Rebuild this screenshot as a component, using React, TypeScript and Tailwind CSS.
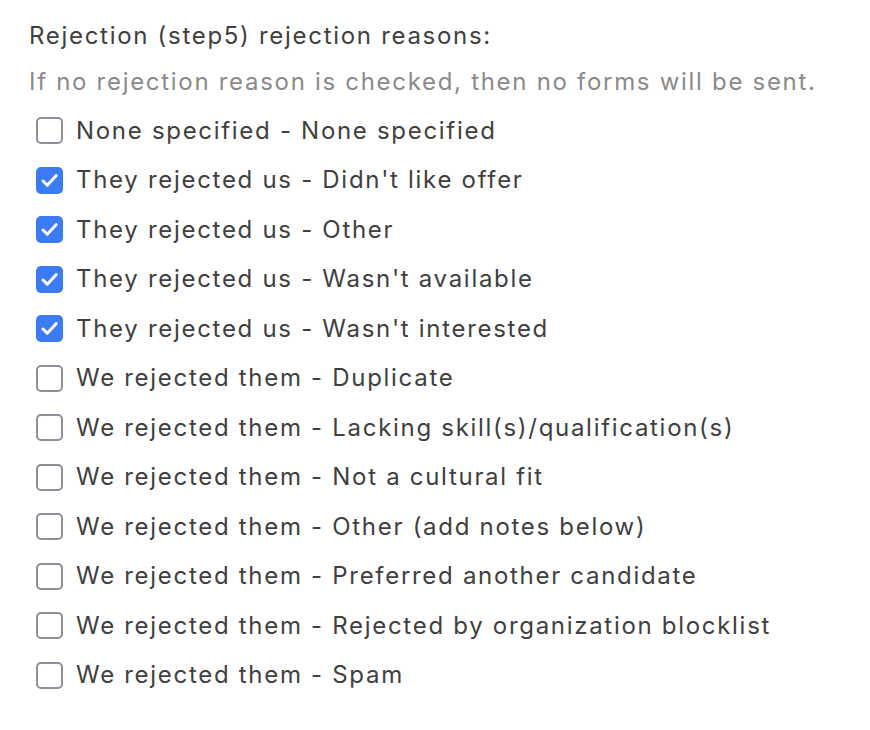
import React from "react";

const items: { label: string; checked: boolean }[] = [
  { label: "None specified - None specified", checked: false },
  { label: "They rejected us - Didn't like offer", checked: true },
  { label: "They rejected us - Other", checked: true },
  { label: "They rejected us - Wasn't available", checked: true },
  { label: "They rejected us - Wasn't interested", checked: true },
  { label: "We rejected them - Duplicate", checked: false },
  { label: "We rejected them - Lacking skill(s)/qualification(s)", checked: false },
  { label: "We rejected them - Not a cultural fit", checked: false },
  { label: "We rejected them - Other (add notes below)", checked: false },
  { label: "We rejected them - Preferred another candidate", checked: false },
  { label: "We rejected them - Rejected by organization blocklist", checked: false },
  { label: "We rejected them - Spam", checked: false },
];

function Box({ checked }: { checked: boolean }) {
  if (checked) {
    return (
      <span className="flex h-[27px] w-[27px] shrink-0 items-center justify-center rounded-[5px] bg-[#3b7cf6]">
        <svg width="27" height="27" viewBox="0 0 27 27" fill="none">
          <path d="M7 14 L11.3 18.3 L20.3 8.6" stroke="white" strokeWidth="3" strokeLinecap="round" strokeLinejoin="round" />
        </svg>
      </span>
    );
  }
  return <span className="h-[27px] w-[27px] shrink-0 rounded-[5px] border-2 border-[#8f8e99] bg-white" />;
}

export default function App() {
  return (
    <div className="min-h-[730px] w-[870px] bg-white px-[29px] pt-[20px] font-['Inter',sans-serif] text-[24px] tracking-[1.7px] text-[#404040]">
      <div className="leading-[32px]">Rejection (step5) rejection reasons:</div>
      <div className="mt-[14px] leading-[32px] text-[#8a8a8a]">If no rejection reason is checked, then no forms will be sent.</div>
      <div className="mt-[8px] flex flex-col">
        {items.map((it) => (
          <label key={it.label} className="flex h-[49.5px] items-center gap-[13px] pl-[7px]">
            <Box checked={it.checked} />
            <span className="leading-[32px]">{it.label}</span>
          </label>
        ))}
      </div>
    </div>
  );
}
